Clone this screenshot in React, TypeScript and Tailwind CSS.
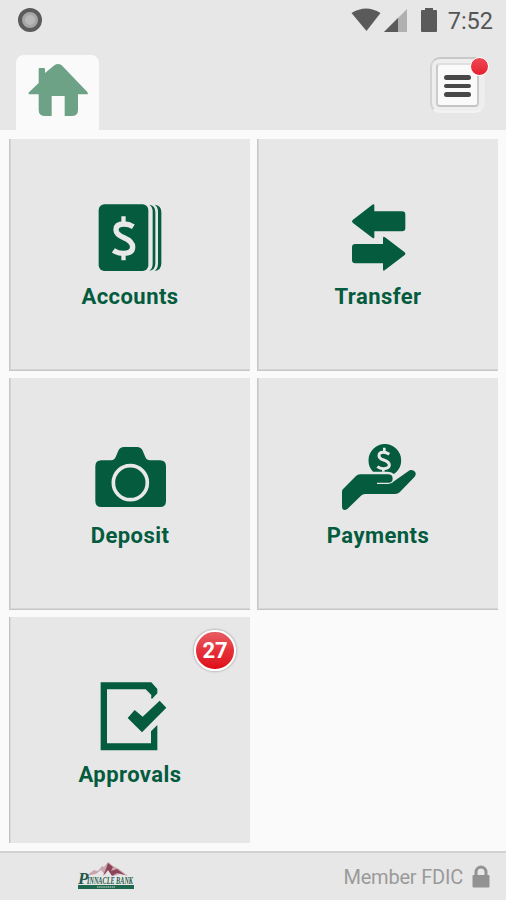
import type { ReactNode } from 'react';

const GREEN = '#045b3e';

function TileIcon({ viewBox, children }: { viewBox: string; children: ReactNode }) {
  return (
    <svg viewBox={viewBox} className="h-[76px] w-[81px] shrink-0" fill={GREEN}>
      {children}
    </svg>
  );
}

function AccountsIcon() {
  return (
    <TileIcon viewBox="57 30 243 228">
      <path d="M254 44 Q274 46 274 66 V220 Q274 241 254 243 Q264 236 264 220 V66 Q264 50 254 44Z" />
      <path d="M238 44 Q256 47 256 66 V220 Q256 240 238 243 Q248 236 248 220 V66 Q248 50 238 44Z" />
      <rect x="86" y="43" width="149" height="200" rx="17" />
      <path d="M190 110 Q177 102 162 102 Q138 102 138 119 Q138 133 162 143 Q188 154 188 171 Q188 190 160 190 Q143 190 130 181" fill="none" stroke="#e8e8e8" strokeWidth="16" />
      <path d="M154 79h13v25h-13zM154 187h13v24h-13z" fill="#e8e8e8" />
    </TileIcon>
  );
}

function TransferIcon() {
  return (
    <TileIcon viewBox="51 30 243 228">
      <path d="M98 90 157 44 Q163 40 163 47 V64 H246 Q256 64 256 74 V114 Q256 124 246 124 H163 V141 Q163 148 157 143 L98 98 Q94 94 98 90Z" />
      <path d="M254 187 195 142 Q189 138 189 145 V162 H106 Q96 162 96 172 V210 Q96 220 106 220 H189 V238 Q189 245 195 240 L254 195 Q258 191 254 187Z" />
    </TileIcon>
  );
}

function DepositIcon() {
  return (
    <TileIcon viewBox="57 27 243 228">
      <path d="M94 91 H123 Q134 91 138 79 L145 62 Q150 51 162 51 H201 Q213 51 218 62 L226 81 Q230 91 240 91 H270 Q288 91 288 109 V213 Q288 231 270 231 H94 Q76 231 76 213 V109 Q76 91 94 91Z" />
      <circle cx="181" cy="158" r="51" fill="none" stroke="#e8e8e8" strokeWidth="11" />
    </TileIcon>
  );
}

function PaymentsIcon() {
  return (
    <TileIcon viewBox="51 27 243 228">
      <path d="M159 125 A49 49 0 1 1 230 125 L222 132 Q213 125 202 125Z" />
      <path d="M208 73 Q199 67 190 67 Q177 67 177 77 Q177 85 191 90 Q208 96 208 105 Q208 116 190 116 Q180 116 172 110" fill="none" stroke="#e8e8e8" strokeWidth="9" />
      <path d="M189 53h8v13h-8zM186 116h8v9h-8z" fill="#e8e8e8" />
      <path d="M120 133 H204 Q218 133 218 146 Q218 158 205 158 H171 V162 H205 Q216 162 222 154 L269 121 Q278 118 285 125 Q290 133 284 140 L239 187 Q234 192 225 192 H135 Q128 192 123 197 L82 237 Q66 246 66 227 V184 Q66 180 70 176 L108 138 Q113 133 120 133Z" />
    </TileIcon>
  );
}

function ApprovalsIcon() {
  return (
    <TileIcon viewBox="57 174 243 228">
      <path d="M92 187 H244 L262 207 V220 L246 237 Q242 235 244 225 L227 208 H111 V370 H243 V334 L262 315 V391 H92Z" />
      <path d="M173 294 194 270 218 290 269 242 289 263 216 337Z" />
    </TileIcon>
  );
}

function Tile({ label, icon, badge, last }: { label: string; icon: ReactNode; badge?: string; last?: boolean }) {
  return (
    <button
      className={`relative flex flex-col items-center bg-[#e7e7e7] pt-[61px] ${
        last
          ? 'h-[226px] shadow-[inset_1px_0_0_#c2c2c2,inset_2px_0_0_#dadada]'
          : 'h-[232px] shadow-[inset_1px_-1px_0_#c6c6c6,inset_2px_-2px_0_#d6d6d6]'
      }`}
    >
      {icon}
      <span className="mt-[7px] pl-[1px] text-[22px] leading-[27px] font-bold tracking-[0.45px] text-[#045b3e]">{label}</span>
      {badge && (
        <span className="absolute top-[13px] right-[14px] flex h-[41px] w-[42px] items-center justify-center rounded-full border-2 border-white bg-linear-to-b from-[#e65b63] via-[#e5303a] to-[#df0714] text-[22px] leading-none font-bold text-white shadow-[0_0_2px_1px_#bbbbbb]">
          {badge}
        </span>
      )}
    </button>
  );
}

function StatusBar() {
  return (
    <div className="flex h-[40px] items-center justify-between pr-[13px] pl-[18px]">
      <svg viewBox="0 0 24 24" className="h-6 w-6">
        <circle cx="12" cy="12" r="10" fill="#a5a5a5" stroke="#5b5b5b" strokeWidth="4" />
        <circle cx="12" cy="12" r="5" fill="#b8b8b8" />
      </svg>
      <div className="flex items-center gap-[10px]">
        <svg viewBox="0 0 88 28" className="h-[28px] w-[88px]" fill="#5a5a5a">
          <path d="M1.5 7 Q16 -2 30.5 7 L16.5 25Z" />
          <path d="M57 3 V26 H34Z" fill="#b0b0b0" />
          <path d="M48 12 V26 H34Z" />
          <path d="M75 2h8v2h3q1 0 1 1v20q0 1-1 1H72q-1 0-1-1V5q0-1 1-1h3z" />
        </svg>
        <span className="translate-y-px text-[23.5px] leading-[24px] whitespace-nowrap text-[#555555]">7:52</span>
      </div>
    </div>
  );
}

function Header() {
  return (
    <header className="h-[130px] shrink-0 bg-[#e7e7e7]">
      <StatusBar />
      <div className="flex h-[90px] items-start justify-between pr-[21px] pl-[16px]">
        <button className="mt-[15px] h-[75px] w-[83px] rounded-t-[8px] bg-[#fafafa]">
          <svg viewBox="48 165 249 225" className="h-[75px] w-[83px]" fill="#6da287">
            <path d="M116 230 V207 Q116 204 119 204 H132 Q135 204 135 207 V219 L163 196 Q174 188 185 196 L262 276 Q266 283 260 283 H234 V329 Q234 348 215 348 H194 V288 H155 V348 H136 Q116 348 116 329 V283 H89 Q83 283 87 277 L116 249Z" />
          </svg>
        </button>
        <button className="relative mt-[17px] flex h-[56px] w-[55px] items-start justify-start rounded-[10px] border-2 border-t-[#c8c8c8] border-r-[#ededed] border-b-[#f3f3f3] border-l-[#d3d3d3] bg-[#eeeeee] pt-[4px] pl-[4px]">
          <span className="flex h-[44px] w-[43px] flex-col items-center justify-center gap-[4px] rounded-[4px] border-2 border-t-[#e0e0e0] border-r-[#cbcbcb] border-b-[#c4c4c4] border-l-[#cbcbcb] bg-[#fafafa] pt-[1px]">
            <span className="h-[5px] w-[27px] rounded-full bg-[#484848]" />
            <span className="h-[4px] w-[27px] rounded-full bg-[#484848]" />
            <span className="h-[5px] w-[27px] rounded-full bg-[#484848]" />
          </span>
          <span className="absolute -top-[2px] -right-[6px] h-[19px] w-[19px] rounded-full border border-white bg-linear-to-b from-[#ee4655] to-[#e6202f]" />
        </button>
      </div>
    </header>
  );
}

function BankLogo() {
  return (
    <svg viewBox="0 0 58 30" className="h-[30px] w-[58px] overflow-visible">
      <path d="M9 14 17 8 21 9 25 4 27 5 31 0 36 4 42 7 51 14 43 12 36 14 31 8 28 13 24 8 19 12Z" fill="#c9a7af" />
      <path d="M31 1 36 5 34 9 40 7 48 13 40 11 35 14 31 8 26 14 29 7Z" fill="#8d4358" />
      <text x="1" y="22" fontFamily="Liberation Serif, serif" fontSize="17" fontStyle="italic" fontWeight="bold" fill="#235747">P</text>
      <text x="10" y="22" fontFamily="Liberation Serif, serif" fontSize="9.5" fontStyle="italic" fontWeight="bold" fill="#235747" textLength="46" lengthAdjust="spacingAndGlyphs">INNACLE BANK</text>
      <rect x="1" y="23" width="56" height="4" fill="#1f674e" />
      <path d="M20 25H38" stroke="#9ab8ac" strokeWidth="1.5" strokeDasharray="1.5 .6" />
    </svg>
  );
}

function Footer() {
  return (
    <footer className="flex h-[49px] shrink-0 items-center justify-between border-t-2 border-[#d2d2d2] bg-[#e7e7e7] pr-[16px] pl-[77px]">
      <BankLogo />
      <div className="flex items-center gap-[9px]">
        <span className="text-[20px] leading-[24px] tracking-[-0.2px] text-[#9a9a9a]">Member FDIC</span>
        <svg viewBox="0 0 18 24" className="h-[24px] w-[18px]" fill="#929292">
          <path d="M4 12V7a5 5 0 0 1 10 0v5" fill="none" stroke="#929292" strokeWidth="3" />
          <rect x="0.5" y="10" width="17" height="12.5" rx="1" />
        </svg>
      </div>
    </footer>
  );
}

export default function App() {
  return (
    <div className="flex h-[900px] w-[506px] flex-col overflow-hidden bg-[#fafafa] font-[Roboto,sans-serif]">
      <Header />
      <main className="grid grow grid-cols-[241px_241px] content-start gap-x-[7px] gap-y-[7px] pt-[9px] pl-[9px]">
        <Tile label="Accounts" icon={<AccountsIcon />} />
        <Tile label="Transfer" icon={<TransferIcon />} />
        <Tile label="Deposit" icon={<DepositIcon />} />
        <Tile label="Payments" icon={<PaymentsIcon />} />
        <Tile label="Approvals" icon={<ApprovalsIcon />} badge="27" last />
      </main>
      <Footer />
    </div>
  );
}
